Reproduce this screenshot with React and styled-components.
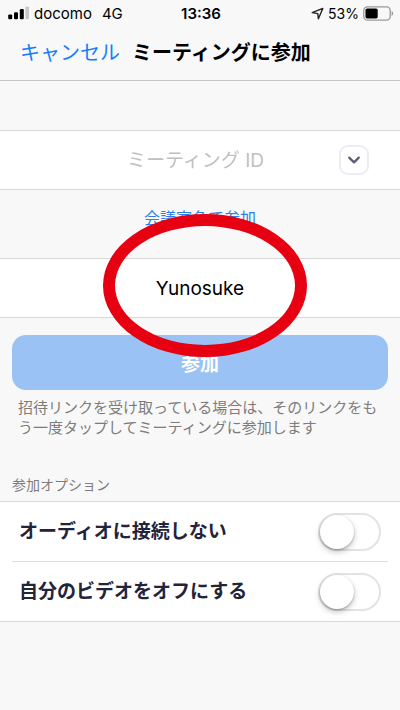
import React, { useState } from 'react'
import styled, { createGlobalStyle } from 'styled-components'

const options = [
  { id: 'no-audio', label: 'オーディオに接続しない' },
  { id: 'no-video', label: '自分のビデオをオフにする' },
]

const SignalIcon = () => (
  <svg width="22" height="14" viewBox="0 0 22 14" aria-hidden="true">
    <rect x="0.2" y="8.4" width="4" height="4.8" rx="1.2" />
    <rect x="6" y="6.2" width="4" height="7" rx="1.2" />
    <rect x="11.8" y="3" width="4" height="10.2" rx="1.2" />
    <rect x="17.4" y="0.4" width="3.6" height="12.8" rx="1.2" fill="#c8c8c8" />
  </svg>
)

const LocationIcon = () => (
  <svg width="13" height="13" viewBox="0 0 13 13" aria-hidden="true">
    <path
      d="M11.8 1.4 L7.4 11.8 L6.8 6.6 L1.2 5.6 Z"
      fill="none"
      stroke="#222"
      strokeWidth="1.4"
      strokeLinejoin="round"
    />
  </svg>
)

const BatteryIcon = () => (
  <svg width="31" height="15" viewBox="0 0 31 15" aria-hidden="true">
    <rect
      x="0.8"
      y="0.8"
      width="26.4"
      height="13.4"
      rx="3.6"
      fill="none"
      stroke="#9a9a9a"
      strokeWidth="1.3"
    />
    <rect x="2.5" y="2.6" width="12.2" height="9.8" rx="1.6" />
    <path d="M28.6 5 Q30.2 5.6 30.2 7.5 Q30.2 9.4 28.6 10 Z" fill="#9a9a9a" />
  </svg>
)

const ChevronIcon = () => (
  <svg width="14" height="10" viewBox="0 0 14 10" aria-hidden="true">
    <path
      d="M2.2 2.6 L7 7.4 L11.8 2.6"
      fill="none"
      stroke="#5c5c78"
      strokeWidth="2.2"
      strokeLinecap="round"
      strokeLinejoin="round"
    />
  </svg>
)

const OptionRow = ({ id, label }) => {
  const [on, setOn] = useState(false)

  return (
    <Row>
      <RowLabel htmlFor={id}>{label}</RowLabel>
      <Switch
        id={id}
        type="checkbox"
        checked={on}
        onChange={(e) => setOn(e.target.checked)}
      />
    </Row>
  )
}

export default function App() {
  const [meetingId, setMeetingId] = useState('')
  const [name, setName] = useState('Yunosuke')

  return (
    <Screen>
      <GlobalStyle />
      <StatusBar>
        <Carrier>
          <SignalIcon />
          <span>docomo</span>
          <Network>4G</Network>
        </Carrier>
        <Time>13:36</Time>
        <Power>
          <LocationIcon />
          <Percent>53%</Percent>
          <BatteryIcon />
        </Power>
      </StatusBar>
      <NavBar>
        <Cancel type="button">キャンセル</Cancel>
        <Title>ミーティングに参加</Title>
      </NavBar>
      <Field>
        <MeetingInput
          aria-label="ミーティング ID"
          placeholder="ミーティング ID"
          value={meetingId}
          onChange={(e) => setMeetingId(e.target.value)}
        />
        <History type="button" aria-label="履歴">
          <ChevronIcon />
        </History>
      </Field>
      <LinkArea>
        <RoomLink href="#room">会議室名で参加</RoomLink>
      </LinkArea>
      <Field>
        <TextInput
          aria-label="名前"
          value={name}
          onChange={(e) => setName(e.target.value)}
        />
        <Marker />
      </Field>
      <JoinArea>
        <Join type="button">参加</Join>
        <Hint>
          招待リンクを受け取っている場合は、そのリンクをもう一度タップしてミーティングに参加します
        </Hint>
      </JoinArea>
      <OptionsTitle>参加オプション</OptionsTitle>
      <Options>
        {options.map((option) => (
          <OptionRow key={option.id} {...option} />
        ))}
      </Options>
    </Screen>
  )
}

const GlobalStyle = createGlobalStyle`
  * {
    box-sizing: border-box;
  }
  body {
    margin: 0;
    background: #f8f8f8;
  }
  button,
  input {
    font-family: inherit;
    margin: 0;
  }
`

const Screen = styled.main`
  min-height: 100vh;
  background: #f8f8f8;
  color: #000;
  font-family: Inter, 'Noto Sans CJK JP', sans-serif;
`

const StatusBar = styled.div`
  display: grid;
  grid-template-columns: 1fr auto 1fr;
  align-items: center;
  height: 26px;
  padding: 0 6px 0 8px;
  font-size: 15px;
`

const Carrier = styled.div`
  display: flex;
  align-items: center;
  gap: 4px;
`

const Network = styled.span`
  margin-left: 6px;
`

const Time = styled.div`
  font-weight: 600;
`

const Power = styled.div`
  display: flex;
  align-items: center;
  justify-content: flex-end;
  gap: 4px;
`

const Percent = styled.span`
  font-size: 14px;
`

const NavBar = styled.header`
  display: flex;
  align-items: center;
  gap: 12px;
  height: 55px;
  padding: 0 20px;
  border-bottom: 1px solid #c4c4c4;
`

const Cancel = styled.button`
  border: 0;
  padding: 0;
  background: none;
  color: #147efb;
  font-size: 20px;
  line-height: 28px;
  white-space: nowrap;
`

const Title = styled.h1`
  margin: 0;
  font-size: 20px;
  font-weight: 700;
  line-height: 28px;
  white-space: nowrap;
`

const Field = styled.div`
  position: relative;
  display: flex;
  align-items: center;
  height: 60px;
  background: #fff;
  border-top: 1px solid #d8d8d8;
  border-bottom: 1px solid #d8d8d8;

  ${NavBar} + & {
    margin-top: 49px;
  }
`

const TextInput = styled.input`
  flex: 1;
  min-width: 0;
  height: 100%;
  border: 0;
  padding: 0;
  outline: none;
  background: none;
  color: #000;
  font-size: 19px;
  text-align: center;

  &::placeholder {
    color: #c0c0c0;
    opacity: 1;
  }
`

const MeetingInput = styled(TextInput)`
  padding-left: 52px;
`

const History = styled.button`
  display: flex;
  align-items: center;
  justify-content: center;
  width: 30px;
  height: 30px;
  margin-right: 31px;
  border: 2px solid #ececf4;
  border-radius: 9px;
  padding: 0;
  background: #fff;
`

const LinkArea = styled.div`
  display: flex;
  align-items: center;
  justify-content: center;
  height: 68px;
  padding-bottom: 12px;
`

const RoomLink = styled.a`
  color: #2c7fea;
  font-size: 16px;
  line-height: 24px;
  text-decoration: none;
`

/* ring round the name, lies over its neighbours */
const Marker = styled.div`
  position: absolute;
  top: -45px;
  left: calc(50% - 97px);
  width: 204px;
  height: 143px;
  border: 12px solid #e60012;
  border-radius: 50%;
  pointer-events: none;
`

const JoinArea = styled.section`
  padding: 17px 12px 0;
`

const Join = styled.button`
  display: block;
  width: 100%;
  height: 55px;
  border: 0;
  border-radius: 14px;
  padding: 0;
  background: #9bc2f5;
  color: #fff;
  font-size: 19px;
  font-weight: 700;
`

const Hint = styled.p`
  margin: 8px 0 0;
  padding: 0 6px;
  color: #7c7c7c;
  font-size: 15px;
  line-height: 20px;
`

const OptionsTitle = styled.h2`
  margin: 37px 12px 6px;
  color: #7c7c7c;
  font-size: 14px;
  font-weight: 400;
  line-height: 20px;
`

const Options = styled.section`
  padding: 0 12px;
  background: #fff;
  border-top: 1px solid #d8d8d8;
  border-bottom: 1px solid #d8d8d8;
`

const Row = styled.div`
  box-sizing: content-box;
  display: flex;
  align-items: center;
  justify-content: space-between;
  height: 59px;
  padding: 0 7px;

  & + & {
    border-top: 1px solid #dcdcdc;
  }
`

const RowLabel = styled.label`
  color: #23233a;
  font-size: 19px;
  font-weight: 600;
  line-height: 28px;
`

const Switch = styled.input`
  appearance: none;
  display: flex;
  align-items: center;
  width: 63px;
  height: 38px;
  border: 2px solid #e3e3e3;
  border-radius: 19px;
  background: #fff;

  &::before {
    content: '';
    width: 34px;
    height: 34px;
    border-radius: 50%;
    background: #fff;
    box-shadow: 0 3px 6px rgba(0, 0, 0, 0.22), 0 1px 2px rgba(0, 0, 0, 0.25);
  }

  &:checked {
    justify-content: flex-end;
    border-color: #4cd964;
    background: #4cd964;
  }
`
